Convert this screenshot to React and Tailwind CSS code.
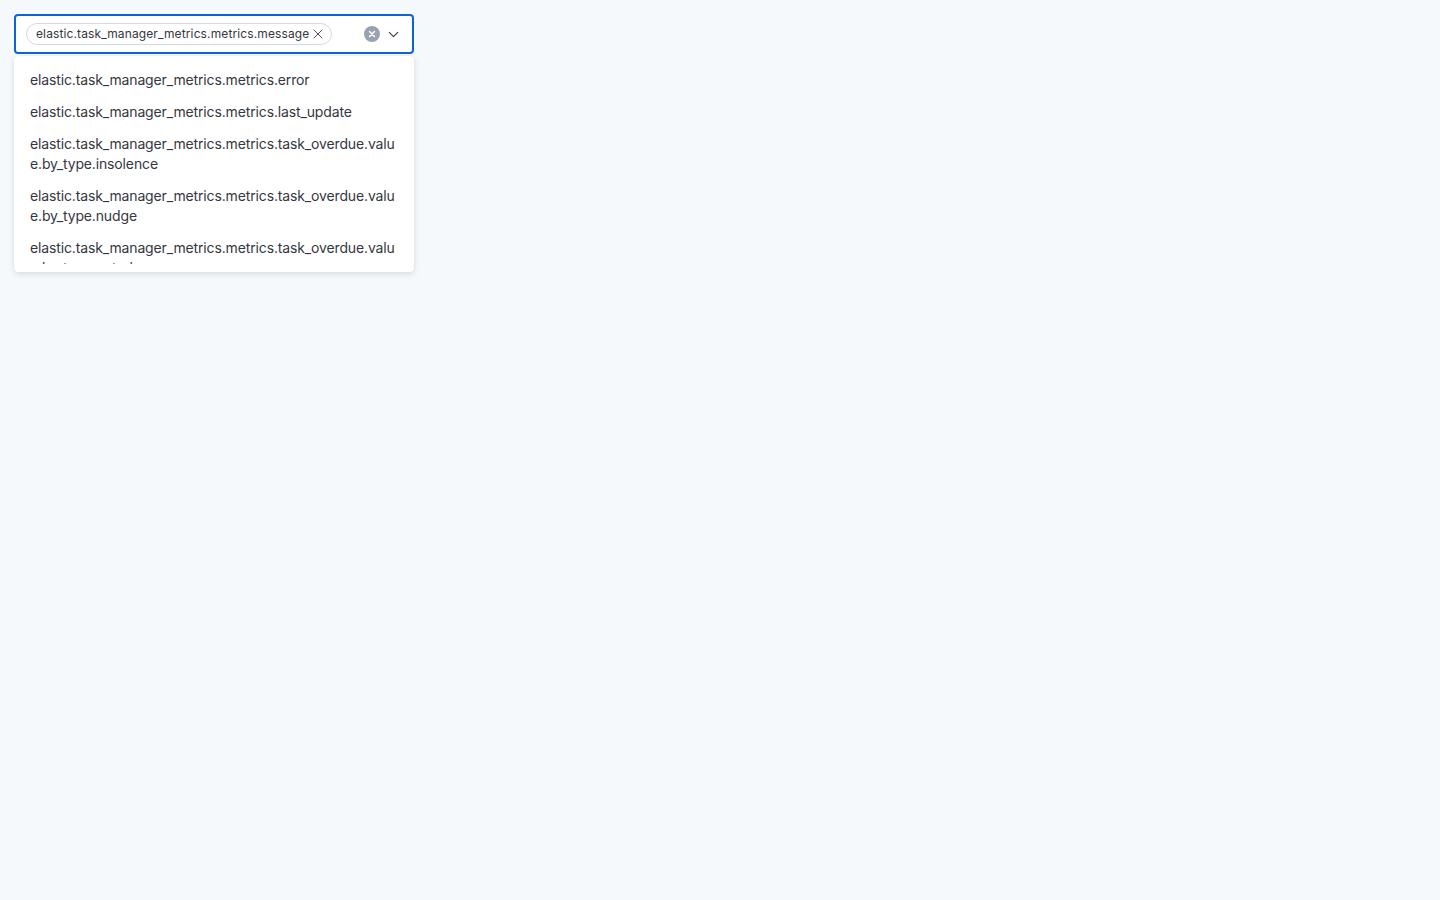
import { ChevronDown, X } from "lucide-react";

const options = [
  "elastic.task_manager_metrics.metrics.error",
  "elastic.task_manager_metrics.metrics.last_update",
  "elastic.task_manager_metrics.metrics.task_overdue.value.by_type.insolence",
  "elastic.task_manager_metrics.metrics.task_overdue.value.by_type.nudge",
  "elastic.task_manager_metrics.metrics.task_overdue.value.by_type.patrol",
  "elastic.task_manager_metrics.metrics.task_overdue.value.by_type.report",
];

function ClearButton() {
  return (
    <button className="flex h-4 w-4 items-center justify-center rounded-full bg-[#98a2b3] text-white">
      <svg width="8" height="8" viewBox="0 0 8 8" fill="none" stroke="currentColor" strokeWidth="1.5" strokeLinecap="round">
        <path d="M1.5 1.5l5 5M6.5 1.5l-5 5" />
      </svg>
    </button>
  );
}

export default function App() {
  return (
    <div className="min-h-screen bg-[#f6f9fc] p-[14px] font-['Inter',sans-serif]">
      <div className="relative w-[400px]">
        <div className="flex h-10 items-center rounded-[4px] border-2 border-[#0b64dd] bg-white pl-[10px] pr-[10px]">
          <span className="flex h-[22px] items-center gap-[1px] rounded-full border border-[#d3dae6] bg-white pl-[9px] pr-[5px] text-[12px] tracking-[0.01em] text-[#343741]">
            elastic.task_manager_metrics.metrics.message
            <X size={16} strokeWidth={1.3} className="text-[#343741]" />
          </span>
          <div className="flex-1" />
          <ClearButton />
          <ChevronDown size={17} strokeWidth={1.5} className="ml-[5px] text-[#343741]" />
        </div>

        <div className="absolute left-0 top-[42px] w-[400px] rounded-[4px] bg-white py-2 shadow-[0_2px_6px_rgba(0,0,0,0.12),0_0_1px_rgba(0,0,0,0.08)]">
          <div className="h-[200px] overflow-hidden">
            {options.map((opt) => (
              <div key={opt} className="px-4 py-1.5 text-[14px] leading-5 tracking-[-0.01em] text-[#343741] break-all">
                {opt}
              </div>
            ))}
          </div>
        </div>
      </div>
    </div>
  );
}
